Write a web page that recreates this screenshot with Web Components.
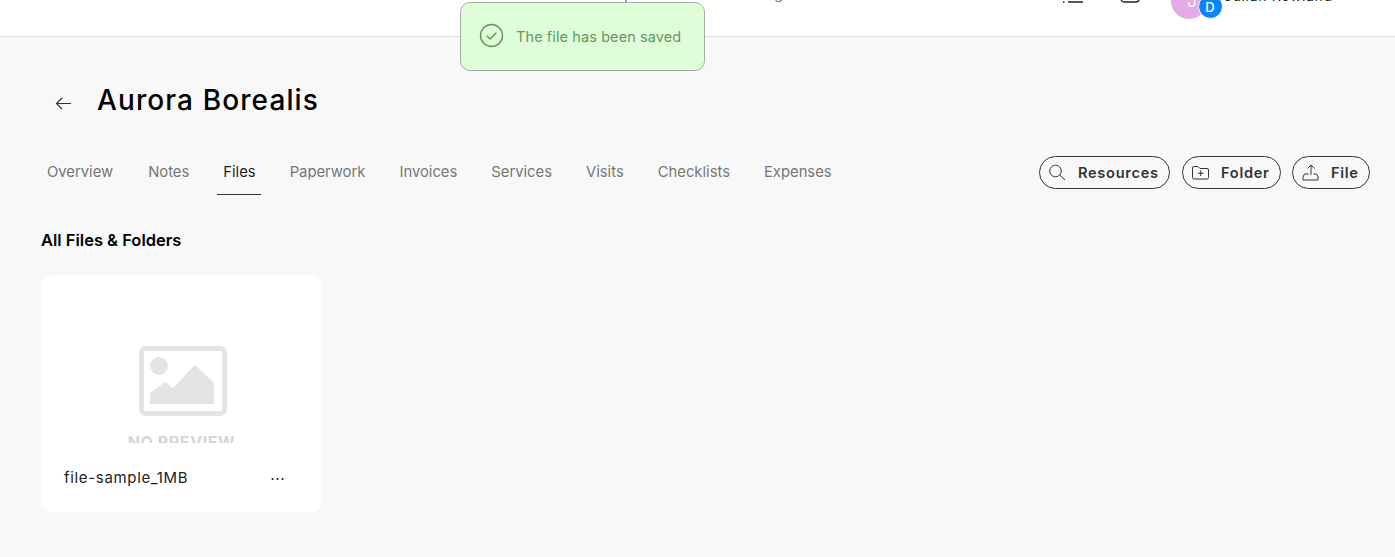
<!DOCTYPE html>
<html>
<head>
<meta charset="utf-8">
<style>
html, body { margin: 0; height: 100%; overflow: hidden; background: #f8f8f8; }
body { font-family: "Inter", "Liberation Sans", sans-serif; color: #111; }
</style>
</head>
<body>
<top-bar></top-bar>
<save-toast>The file has been saved</save-toast>
<main-page></main-page>

<script>
class TopBar extends HTMLElement {
    constructor() {
        super();
        this.attachShadow({ mode: 'open' }).innerHTML = `
            <style>
            :host { display: block; height: 36px; background: #fff; border-bottom: 1px solid #dedede; overflow: hidden; position: relative; }
            .nav { position: absolute; left: 624px; top: -15px; font-size: 15px; color: #777; line-height: 18px; white-space: nowrap; }
            .nav span { position: absolute; top: 0; }
            .icons { position: absolute; left: 1062px; top: -11px; display: flex; gap: 36px; }
            .avatar { position: absolute; left: 1171px; top: -17px; width: 36px; height: 36px; box-sizing: border-box; padding-left: 6px; border-radius: 50%; background: #e6a9e6; color: #fff; font-size: 17px; line-height: 36px; text-align: center; }
            .badge { position: absolute; left: 1197.500px; top: -6px; width: 23px; height: 23px; border-radius: 50%; background: #0a84ff; color: #fff; font-size: 13px; font-weight: 500; border: 1.5px solid #fff; display: flex; align-items: center; justify-content: center; }
            .name { position: absolute; left: 1224px; top: -13px; font-size: 14px; letter-spacing: .65px; line-height: 17px; white-space: nowrap; color: #222; }
            </style>
            <div class="nav"><span style="left:0">p</span><span style="left:150px">g</span></div>
            <div class="icons">
                <svg width="22" height="14" viewBox="0 0 22 14" fill="none" stroke="#222" stroke-width="1.3"><path d="M6 3h15M6 8h15M6 13h15M1 3h1.5M1 8h1.5M1 13h1.5"/></svg>
                <svg width="21" height="14" viewBox="0 0 21 14" fill="none" stroke="#222" stroke-width="1.3"><rect x="1" y="-6" width="18" height="19" rx="3"/></svg>
            </div>
            <div class="avatar">J</div>
            <div class="badge">D</div>
            <div class="name">Julian Rowland</div>
        `;
    }
}

class SaveToast extends HTMLElement {
    constructor() {
        super();
        this.attachShadow({ mode: 'open' }).innerHTML = `
            <style>
            :host { position: absolute; left: 460px; top: 2px; width: 245px; height: 69px; box-sizing: border-box; display: flex; align-items: center; gap: 12px; padding-left: 18px; background: #e0fdd9; border: 1px solid #a8aca6; border-radius: 10px; color: #5f9a5f; font-size: 14.500px; letter-spacing: .1px; z-index: 5; }
            svg { flex: none; margin-top: -2px; }
            </style>
            <svg width="25" height="25" viewBox="0 0 25 25" fill="none" stroke="#5c995c" stroke-width="1.4"><circle cx="12.500" cy="12.500" r="11"/><path d="M8 13l3.200 3 5.800-6" stroke-linecap="round" stroke-linejoin="round"/></svg>
            <slot></slot>
        `;
    }
}

class TabItem extends HTMLElement {
    constructor() {
        super();
        this.attachShadow({ mode: 'open' }).innerHTML = `
            <style>
            :host { display: block; position: relative; padding: 0 5px 0 6px; height: 45px; line-height: 45px; font-size: 14.800px; color: #767676; white-space: nowrap; }
            :host([active]) { color: #1c1c1c; }
            :host([active]) .line { position: absolute; left: 0; right: 0; bottom: 0; height: 1px; background: #333; }
            </style>
            <slot></slot><div class="line"></div>
        `;
    }
}

class PillButton extends HTMLElement {
    constructor() {
        super();
        this.attachShadow({ mode: 'open' }).innerHTML = `
            <style>
            :host { display: flex; align-items: center; height: 33px; box-sizing: border-box; border: 1px solid #333; border-radius: 17px; padding: 0 9px; gap: 11px; font-size: 14.600px; font-weight: 600; letter-spacing: .7px; color: #333; white-space: nowrap; }
            </style>
            <slot name="icon"></slot><slot></slot>
        `;
    }
}

class FileCard extends HTMLElement {
    constructor() {
        super();
        this.attachShadow({ mode: 'open' }).innerHTML = `
            <style>
            :host { display: flex; flex-direction: column; width: 281px; height: 237px; background: #fff; border-radius: 10px; }
            .preview { flex: none; height: 168px; overflow: hidden; display: flex; flex-direction: column; align-items: center; padding-top: 71px; box-sizing: border-box; }
            .preview svg { flex: none; margin-left: 2px; }
            .no { flex: none; margin-top: 17px; font-size: 16px; line-height: 19px; font-weight: 700; color: #d6d6d6; letter-spacing: .6px; white-space: nowrap; }
            .foot { display: flex; justify-content: space-between; align-items: center; padding: 25px 37px 0 23px; font-size: 15px; letter-spacing: .67px; color: #222; }
            .dots { font-size: 15px; line-height: 10px; letter-spacing: 0; }
            </style>
            <div class="preview">
                <svg width="88" height="70" viewBox="0 0 88 70"><rect x="2.500" y="2.500" width="83" height="65" rx="4" fill="none" stroke="#e4e4e4" stroke-width="5"/><circle cx="20" cy="20" r="9" fill="#e4e4e4"/><path d="M11 58V47L26 36l8 6 22-23 19 18v21z" fill="#e4e4e4"/></svg>
                <div class="no">NO PREVIEW</div>
            </div>
            <div class="foot"><slot></slot><span class="dots">&#8943;</span></div>
        `;
    }
}

class MainPage extends HTMLElement {
    constructor() {
        super();
        this.attachShadow({ mode: 'open' }).innerHTML = `
            <style>
            :host { display: block; padding: 0 25px 0 41px; }
            .head { display: flex; align-items: center; padding: 44px 0 0 14px; height: 38px; }
            .head svg { margin-right: 25px; margin-top: 6px; }
            h1 { margin: 0; font-size: 28px; font-weight: 500; letter-spacing: 1.100px; line-height: 38px; color: #000; }
            .bar { display: flex; align-items: flex-start; justify-content: space-between; margin-top: 31px; }
            .tabs { display: flex; gap: 23px; }
            .tabs tab-item:nth-child(2) { margin-left: 1px; }
            .actions { display: flex; gap: 11px; margin-top: 6px; }
            .actions pill-button:nth-child(1) { width: 131px; }
            .actions pill-button:nth-child(2) { width: 99px; margin-left: 1px; }
            .actions pill-button:nth-child(3) { width: 78px; }
            h2 { margin: 34px 0 0; font-size: 16.500px; font-weight: 600; line-height: 22px; color: #000; }
            file-card { margin-top: 24px; }
            </style>
            <div class="head">
                <svg width="17" height="13" viewBox="0 0 17 13" fill="none" stroke="#333" stroke-width="1.2"><path d="M16 6.500H1.500M7 1L1.500 6.500 7 12"/></svg>
                <h1>Aurora Borealis</h1>
            </div>
            <div class="bar">
                <div class="tabs">
                    <tab-item>Overview</tab-item><tab-item>Notes</tab-item><tab-item active>Files</tab-item><tab-item>Paperwork</tab-item><tab-item>Invoices</tab-item><tab-item>Services</tab-item><tab-item>Visits</tab-item><tab-item>Checklists</tab-item><tab-item>Expenses</tab-item>
                </div>
                <div class="actions">
                    <pill-button><svg slot="icon" width="18" height="18" viewBox="0 0 18 18" fill="none" stroke="#333" stroke-width="1"><circle cx="6.500" cy="7" r="5.800"/><path d="M10.700 11l5.300 5"/></svg>Resources</pill-button>
                    <pill-button><svg slot="icon" width="18" height="14" viewBox="0 0 18 14" fill="none" stroke="#333" stroke-width="1"><path d="M.5 2A1.500 1.500 0 0 1 2 .5h4l2 2h7A1.500 1.500 0 0 1 16.500 4v7.500A1.500 1.500 0 0 1 15 13H2a1.500 1.500 0 0 1-1.500-1.500zM8.700 4.500v5.500M6 7.300h5.500"/></svg>Folder</pill-button>
                    <pill-button><svg slot="icon" width="18" height="17" viewBox="0 0 18 17" fill="none" stroke="#333" stroke-width="1"><path d="M9 11V1M5.500 4.500L9 1l3.500 3.500M6.500 10H2.500L1 13v3h15v-3l-1.500-3H11.500"/></svg>File</pill-button>
                </div>
            </div>
            <h2>All Files &amp; Folders</h2>
            <file-card>file-sample_1MB</file-card>
        `;
    }
}

customElements.define('top-bar', TopBar);
customElements.define('save-toast', SaveToast);
customElements.define('tab-item', TabItem);
customElements.define('pill-button', PillButton);
customElements.define('file-card', FileCard);
customElements.define('main-page', MainPage);
</script>
</body>
</html>
